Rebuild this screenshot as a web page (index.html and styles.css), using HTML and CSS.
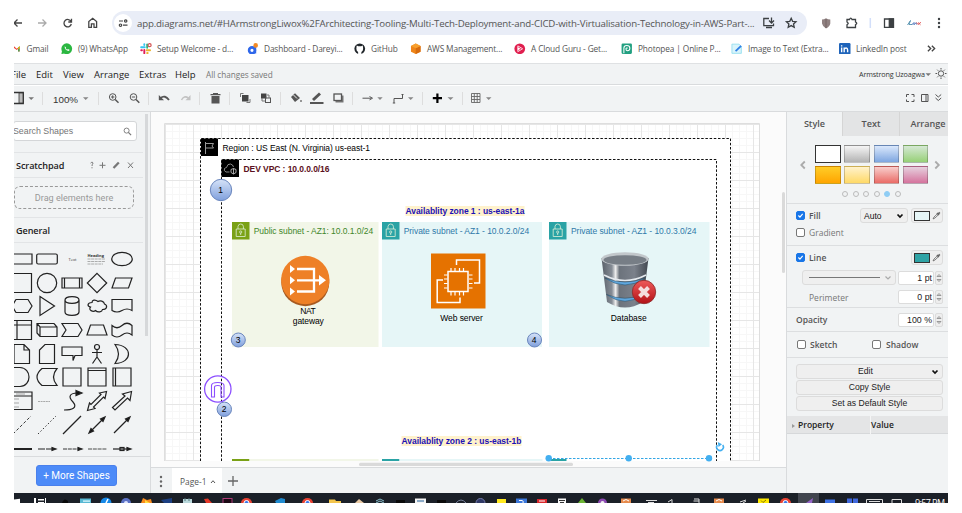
FILE: index.html
```html
<!DOCTYPE html>
<html lang="en">
<head>
<meta charset="utf-8">
<title>diagrams.net</title>
<link rel="stylesheet" href="styles.css">
</head>
<body>
<div class="window">
  <header class="address-row">
    <svg class="nav-icons" viewBox="14 11 98 24" fill="none" stroke="#444" stroke-width="1.3">
      <path d="M22 23H14.500M17.500 19.500L14 23L17.500 26.500"/>
      <path stroke="#aaa" d="M38 23H46M42.500 19.500L46 23L42.500 26.500"/>
      <path d="M71 21.500A3.700 3.700 0 1 0 71.300 24M71.500 18.800V22H68.300"/>
      <path d="M88.800 27.300V21.500L92.700 18.300L96.600 21.500V27.300H94V23.800H91.400V27.300Z"/>
    </svg>
    <div class="url-pill">
      <svg class="site-icon" viewBox="-9 -9 18 18" fill="none" stroke="#444" stroke-width="1.200"><circle r="9" fill="#fff" stroke="none"/><path d="M-4-2H0M0 2.200H4.500"/><circle cx="2.700" cy="-2" r="1.200"/><circle cx="-2.500" cy="2.200" r="1.200"/></svg>
      <span class="url">app.diagrams.net/#HArmstrongLiwox%2FArchitecting-Tooling-Multi-Tech-Deployment-and-CICD-with-Virtualisation-Technology-in-AWS-Part-...</span>
      <svg class="pill-icons" viewBox="762 14 36 18" fill="none" stroke="#3c4043" stroke-width="1.300"><path d="M769 18.500H763.800V25.700H773.500V23.500M766 27.500H772M771.500 17.500V22.500M769 20.500L771.500 23L774 20.500"/><path d="M791.200 18.300L792.600 21.300L796 21.700L793.500 24L794.200 27.200L791.200 25.600L788.200 27.200L788.900 24L786.400 21.700L789.800 21.300Z"/></svg>
    </div>
    <svg class="ext-icons" viewBox="807 11 141 24" fill="none" stroke="#3c4043" stroke-width="1.300">
      <path d="M822 19.500Q824 19.500 826 18.200Q828 19.500 830.300 19.500V23.500Q829.800 26.500 826 28.500Q822.500 26.500 822 23.500Z" fill="#8f8080" stroke="none"/><path d="M826 19V28" stroke="#7a6a6a"/>
      <path d="M847 19.500H849.500Q850.700 16.800 852 19.500H855.500V22Q858 23.200 855.500 24.700V27.500H847V24.700Q849.500 23.300 847 22Z"/>
      <path d="M870.300 18V28" stroke="#d3dffa" stroke-width="1.500"/>
      <path d="M884.500 19H893.300V27.300H884.500Z"/><path d="M889.300 19H893.500V27.300H889.300Z" fill="#3c4043"/>
      <path d="M907.500 25L910.500 20.500L909 24.500H912.500" stroke="#3d84a5" stroke-width=".8"/><path d="M912 24.500L914 22.500L914 24.800L916 22.700L916.500 24.500" stroke="#416bb5" stroke-width=".9"/><path d="M916.500 22.500L918 24.500L921 22.300M918 22.400L920.500 24.800" stroke="#dd4949" stroke-width=".9"/>
      <g fill="#3c4043" stroke="none"><circle cx="939" cy="19" r="1.200"/><circle cx="939" cy="23" r="1.200"/><circle cx="939" cy="27" r="1.200"/></g>
    </svg>
  </header>

  <nav class="bookmarks">
    <a><svg viewBox="0 0 10 10"><path d="M0 2L3.500 5L7 2V8.500H5.200V5L3.500 6.500L0 4Z" fill="#ea4335"/><path d="M5.200 3.500L7 2V8.500H5.200Z" fill="#34a853"/><path d="M5.200 3.500L7 2V4.500L5.200 5.500Z" fill="#fbbc04"/></svg><span>Gmail</span></a>
    <a><svg viewBox="0 0 10 10"><circle cx="5" cy="5" r="4.700" fill="#2bb741"/><path d="M.3 9.700L1 6.500L3.400 9Z" fill="#2bb741"/><path d="M3.200 2.800Q3 6.500 7 7L7.400 5.900L6 5.300L5.300 5.900L4 4.600L4.400 4Z" fill="#fff"/></svg><span>(9) WhatsApp</span></a>
    <a><svg viewBox="0 0 12 12" stroke-width="2" stroke-linecap="round"><path d="M1.200 4.500H5M4.500 1.200V2" stroke="#36c5f0"/><path d="M7.500 1.500V5" stroke="#2eb67d"/><path d="M7 7.500H10.500M7.500 10.500H8" stroke="#ecb22e"/><path d="M4.500 7.200V10.700M1.300 7.500H2" stroke="#e01e5a"/><circle cx="10" cy="2.300" r="1.600" fill="#fff" stroke="#d45454" stroke-width="1.300"/></svg><span>Setup Welcome - d...</span></a>
    <a><svg viewBox="0 0 10 11"><circle cx="4.300" cy="7" r="2.800" fill="none" stroke="#2f67ea" stroke-width="2.500"/><path d="M6 3H8.300V10H6Z" fill="#2f67ea"/><circle cx="7.800" cy="2.300" r="2.200" fill="#f28a25"/></svg><span>Dashboard - Dareyi...</span></a>
    <a><svg viewBox="0 0 12 12"><circle cx="6" cy="6" r="5.600" fill="#20252a"/><path d="M4.300 11.800V9.500Q2 8 2.600 4.600L2.800 2.500L4.500 3.300H7.500L9.200 2.500L9.400 4.600Q10 8 7.700 9.500V11.800Z" fill="#fff"/></svg><span>GitHub</span></a>
    <a><svg viewBox="0 0 12 12"><path d="M6 .5L11 3V9L6 11.500L1 9V3Z" fill="#ef8519"/><path d="M6 5.500L11 3V9L6 11.500Z" fill="#d66b0e"/><path d="M6 .5L11 3L6 5.500L1 3Z" fill="#f7a02e"/></svg><span>AWS Management...</span></a>
    <a><svg viewBox="0 0 12 12"><circle cx="6" cy="6" r="5.600" fill="#e01f4f"/><path d="M4 3L9 6L4 9Z" fill="none" stroke="#ffd9e4"/><path d="M4 4.500L7 6L4 7.500Z" fill="#fff"/></svg><span>A Cloud Guru - Get...</span></a>
    <a><svg viewBox="0 0 10 10"><rect x=".5" y=".5" width="9" height="9" rx="1" fill="#22a081"/><path d="M2.500 9V4.500Q2.500 2.200 5 2.200Q7.700 2.200 7.700 4.600Q7.700 6.700 5.500 6.700Q4.200 6.500 4.300 5Q4.700 3.900 5.800 4.500" fill="none" stroke="#fff" stroke-width=".9"/></svg><span>Photopea | Online P...</span></a>
    <a><svg viewBox="0 0 10 10"><path d="M.8 1H7L9 3V9H.8Z" fill="#d9f4fb" stroke="#8bdcee" stroke-width=".7"/><path d="M4 7L8.800 2.500" stroke="#2f7fe6" stroke-width="1.600"/></svg><span>Image to Text (Extra...</span></a>
    <a><svg viewBox="0 0 10 10"><rect width="10" height="10" rx="1" fill="#1f64ba"/><path d="M2.300 4V8M2.300 2V3M4.500 8V4M4.500 5.500Q5 4.300 6.200 4.300Q7.500 4.300 7.500 6V8" fill="none" stroke="#fff" stroke-width="1.200"/></svg><span>LinkedIn post</span></a>
    <svg class="more" viewBox="0 0 8 8" fill="none" stroke="#444" stroke-width="1.200"><path d="M.8 1.500L3.300 4L.8 6.500M4.300 1.500L6.800 4L4.300 6.500"/></svg>
  </nav>

  <nav class="menubar">
    <span>File</span><span>Edit</span><span>View</span><span>Arrange</span><span>Extras</span><span>Help</span><span class="saved">All changes saved</span>
    <span class="user">Armstrong Uzoagwa</span>
    <svg class="user-icons" viewBox="924 66 24 16" fill="none" stroke="#555"><path d="M925.500 73.300H931L928.200 76Z" fill="#777" stroke="none"/><circle cx="941" cy="73.500" r="2.700"/><path d="M941 68V69.500M941 77.500V79M935.500 73.500H937M945 73.500H946.500M937.200 69.700L938.200 70.700M943.800 76.300L944.800 77.300M944.800 69.700L943.800 70.700M937.200 77.300L938.200 76.300"/></svg>
  </nav>

  <div class="toolbar">
    <svg class="tool-a" viewBox="14 87 39 24"><path d="M14 92.500H23.300V103.500H14" fill="none" stroke="#333" stroke-width="1.300"/><path d="M19 93H23V103H19Z" fill="#bbb" stroke="#333" stroke-width=".8"/><path d="M28.500 97.200H34L31.200 100Z" fill="#777"/><path d="M42.500 92V105" stroke="#ddd"/></svg>
    <span class="zoom-value">100%</span>
    <svg class="tool-b" viewBox="80 87 420 24" fill="none" stroke="#555">
      <path d="M83 97.200H88.500L85.700 100ZM377.300 97.200H382.700L380 100ZM408 97.200H413.500L410.700 100ZM447.500 97.200H453.500L450.500 100ZM486 97.200H491.500L488.700 100Z" fill="#888" stroke="none"/>
      <path d="M98.500 92V105M148.500 92V105M199.500 92V105M229.500 92V105M280.500 92V105M352.500 92V105M422.500 92V105M462.500 92V105" stroke="#ddd"/>
      <circle cx="112.700" cy="97" r="3.300"/><path d="M115.200 99.500L118.500 102.700" stroke-width="1.500"/><path d="M111 97H114.400M112.700 95.300V98.700"/>
      <circle cx="133.500" cy="97" r="3.300"/><path d="M136 99.500L139.300 102.700" stroke-width="1.500"/><path d="M131.800 97H135.200"/>
      <path d="M160.500 98Q165 94.500 169 100" stroke-width="1.800"/><path d="M158.800 95V100.300H164Z" fill="#555" stroke="none"/>
      <path d="M181.500 100Q184 95 188.500 98" stroke="#c2c2c2" stroke-width="1.500"/><path d="M190.500 95V100.300H185.500Z" fill="#c2c2c2" stroke="none"/>
      <path d="M211.500 96H219.500V103.500H211.500ZM210.500 94H213V93H218V94H220.500V95.200H210.500Z" fill="#555" stroke="none"/>
      <rect x="242" y="95" width="6.500" height="6.500" fill="#444" stroke="none"/><path d="M243.500 93.500H240.500V97M246.500 102.500H250V99" stroke="#777"/>
      <rect x="261" y="93.500" width="5.500" height="5" fill="#444" stroke="none"/><rect x="265.500" y="98" width="5" height="4.500"/><path d="M262 98V101H265M267 95H269V98" stroke="#777"/>
      <path d="M291 97L295 93.200L300 98L295 102Z" fill="#555" stroke="none"/><path d="M293.500 95L297 98.500" stroke="#eee"/><circle cx="301" cy="101" r="1" fill="#777" stroke="none"/>
      <path d="M313 100L320 93.500" stroke-width="3"/><path d="M310 103H323.500" stroke-width="2"/>
      <rect x="335.500" y="95.500" width="8" height="7" fill="#777" stroke="none"/><rect x="334" y="94" width="7.500" height="6.500" fill="#f1f3f4" stroke-width="1.300"/>
      <path d="M362.500 98.200H371M369.500 96.500L372.500 98.200L369.500 99.900"/>
      <path d="M394 103V98.500H402.500V94.500M392.800 103H395.200M401.500 94.500H403.500"/>
      <path d="M432.800 98.200H442M437.400 93.500V103" stroke="#000" stroke-width="2.200"/>
      <path d="M471.500 93.500H480V102.500H471.500ZM471.500 96.500H480M471.500 99.500H480M474.300 93.500V102.500M477.200 93.500V102.500" stroke="#666" stroke-width=".9"/>
    </svg>
    <svg class="tool-c" viewBox="900 87 48 24" fill="none" stroke="#555"><path d="M906.500 97V94.500H909M911.500 94.500H914V97M914 99.500V101.500H911.500M909 101.500H906.500V99.500M921.500 94.500H928V101.500H921.500ZM926 94.500V101.500M935.500 94.500L938.300 97L941.200 94.500M935.500 98L938.300 100.500L941.200 98"/></svg>
  </div>

  <main class="workspace">
    <aside class="sidebar">
      <div class="search"><span>Search Shapes</span><svg viewBox="0 0 10 10" fill="none" stroke="#777"><circle cx="4" cy="4" r="2.800"/><path d="M6 6L9 9" stroke-width="1.400"/></svg></div>
      <div class="side-title"><b>Scratchpad</b><svg viewBox="88 159 50 12" fill="none" stroke="#777"><path d="M90.700 163.300Q91.200 162 92.300 162.200Q93.800 162.800 92.300 164.500L92 166M92 167.200V168.300M99.500 165.300H105.500M102.500 162.300V168.300"/><path d="M113.500 168L118.800 162.500" stroke-width="2.300"/><path d="M128 162.500L133 168M133 162.500L128 168"/></svg></div>
      <div class="drop-zone"><span>Drag elements here</span></div>
      <div class="side-title general"><b>General</b></div>
      <div class="shapes">
        <svg viewBox="-12 -12 24 24"><path d="M-10-5H10V5H-10Z"/></svg>
        <svg viewBox="-12 -12 24 24"><rect x="-10.300" y="-5" width="20.600" height="10" rx="1.500"/></svg>
        <svg viewBox="-12 -12 24 24"><text x="-3.500" y="1.500" font-size="4">Text</text></svg>
        <svg viewBox="-12 -12 24 24"><text x="-9.500" y="-2" font-size="4" font-weight="bold">Heading</text><path d="M-9.500 0H8M-9.500 2.500H8M-9.500 5H6" stroke="#999" stroke-width=".8" stroke-dasharray="3 .6"/></svg>
        <svg viewBox="-12 -12 24 24"><ellipse rx="10.300" ry="6.700"/></svg>

        <svg viewBox="-12 -12 24 24"><path d="M-10-9.500H9.500V9.500H-10Z"/></svg>
        <svg viewBox="-12 -12 24 24"><circle r="9.700"/></svg>
        <svg viewBox="-12 -12 24 24"><path d="M-10-5H10V5H-10ZM-7.500-5V5M7.500-5V5"/></svg>
        <svg viewBox="-12 -12 24 24"><path d="M0-9.700L9.700 0L0 9.700L-9.700 0Z"/></svg>
        <svg viewBox="-12 -12 24 24"><path d="M-6.500-5H10L6.500 5H-10Z"/></svg>

        <svg viewBox="-12 -12 24 24"><path d="M-6-6.500H6L10 0L6 6.500H-6L-10 0Z"/></svg>
        <svg viewBox="-12 -12 24 24"><path d="M-7-9.500L7.500 0L-7 9.500Z"/></svg>
        <svg viewBox="-12 -12 24 24"><path d="M-7-6V6C-7 10.500 7 10.500 7 6V-6C7-10.500-7-10.500-7-6C-7-1.500 7-1.500 7-6"/></svg>
        <svg viewBox="-12 -12 24 24"><path d="M-5-3.500C-10-3-10 0-6.500 1C-9 4-4 6.500-1.500 4.500C1 7 5 6 5.500 3.500C10 3.500 11-.5 7.500-2C7-5 3-6 1-4.500C-2-7-5-6-5-3.500Z"/></svg>
        <svg viewBox="-12 -12 24 24"><path d="M-10-6.500H10V4.500Q5 1.500 0 4.500T-10 4.500Z"/></svg>

        <svg viewBox="-12 -12 24 24"><path d="M-10-9.500H9.500V9.500H-10ZM-10-5H9.500M-5-9.500V9.500"/></svg>
        <svg viewBox="-12 -12 24 24"><path d="M-10-6.500H7L10-3V6.500H-7L-10 3ZM-10-6.500L-7-3H10M-7-3V6.500"/></svg>
        <svg viewBox="-12 -12 24 24"><path d="M-10-6.500H6L10 0L6 6.500H-10L-6 0Z"/></svg>
        <svg viewBox="-12 -12 24 24"><path d="M-6.500-5H6.500L10 5H-10Z"/></svg>
        <svg viewBox="-12 -12 24 24"><path d="M-10-4.500Q-5 0 0-4.500T10-4.500V5Q5 1 0 5T-10 5Z"/></svg>

        <svg viewBox="-12 -12 24 24"><path d="M-8-9.500H2L7.500-4V9.500H-8ZM2-9.500V-4H7.500"/></svg>
        <svg viewBox="-12 -12 24 24"><path d="M-2-9.500H7.500V9.500H-7.500V-4Z"/></svg>
        <svg viewBox="-12 -12 24 24"><path d="M-10-7H10V1.500H3L1 6.500V1.500H-10Z"/></svg>
        <svg viewBox="-12 -12 24 24"><circle cy="-7" r="2.500"/><path d="M0-4.500V3M-5-1.500H5M-4.500 9.500L0 3L4.500 9.500"/></svg>
        <svg viewBox="-12 -12 24 24"><path d="M-7-9.500C11-9 11 9-7 9.500Q0 0-7-9.500Z"/></svg>

        <svg viewBox="-12 -12 24 24"><path d="M-9-9.500H-2C10-9 10 9-2 9.500H-9Z"/></svg>
        <svg viewBox="-12 -12 24 24"><path d="M-5-8.500H10Q3 0 10 8.500H-5Q-15 0-5-8.500Z"/></svg>
        <svg viewBox="-12 -12 24 24"><path d="M-9-9H9V9H-9Z"/></svg>
        <svg viewBox="-12 -12 24 24"><path d="M-9-9H9V9H-9ZM-9-6.500H9"/></svg>
        <svg viewBox="-12 -12 24 24"><path d="M-9-9H9V9H-9ZM-6.500-9V9"/></svg>

        <svg viewBox="-12 -12 24 24"><path d="M-10-9H10V8.500H-10ZM-10-5H10"/><path d="M-6-7H3M-8-2H-3M-8 2H-3M-8 6H-3" stroke="#888" stroke-width=".7"/></svg>
        <svg viewBox="-12 -12 24 24"><path d="M-9 .5H3" stroke="#888" stroke-width=".7" stroke-dasharray="2 .6"/></svg>
        <svg viewBox="-12 -12 24 24"><path d="M-8 9C0 9 6 7 1 1C-5-5-1-8 5-8"/><path d="M4-10.500L10-8L4-5.500Z" fill="#111"/></svg>
        <svg viewBox="-12 -12 24 24"><path d="M-9.500 9.500L-7.500 2L-6 3.500L4-6.500L2.500-8L9.500-9.500L8-2.500L6.500-4L-3.500 6L-2 7.500Z"/></svg>
        <svg viewBox="-12 -12 24 24"><path d="M-9.500 6.500L3-5L.5-7L9.500-9.500L8-.5L5.500-3L-7 9Z"/></svg>

        <svg viewBox="-12 -12 24 24"><path d="M-9 9L9-9" stroke-dasharray="3 2" stroke-width=".9"/></svg>
        <svg viewBox="-12 -12 24 24"><path d="M-9 9L9-9" stroke-dasharray="1.500 2" stroke-width=".9"/></svg>
        <svg viewBox="-12 -12 24 24"><path d="M-9 9L9-9"/></svg>
        <svg viewBox="-12 -12 24 24"><path d="M-7 7L7-7"/><path d="M-8 8L-6 3.500L-3.500 6ZM8-8L6-3.500L3.500-6Z" fill="#111"/></svg>
        <svg viewBox="-12 -12 24 24"><path d="M-8 8L6-6"/><path d="M8-8L6-3.500L3.500-6Z" fill="#111"/></svg>

        <svg viewBox="-12 -12 24 24"><path d="M-10 0H10" stroke-width="2"/></svg>
        <svg viewBox="-12 -12 24 24"><path d="M-9 0H8" stroke-dasharray="7 1"/><path d="M5-1.500L9 0L5 1.500Z" fill="#111"/></svg>
        <svg viewBox="-12 -12 24 24"><path d="M-9 0H8" stroke-dasharray="4 .8" stroke-width=".9"/><path d="M6-1.500L10 0L6 1.500Z" fill="#111"/></svg>
        <svg viewBox="-12 -12 24 24"><path d="M-9 0H10" stroke-dasharray="4 .8" stroke-width=".8"/></svg>
        <svg viewBox="-12 -12 24 24"><path d="M-9 0H8"/><rect x="-2" y="-1.500" width="4" height="3"/><path d="M5-1.500L9 0L5 1.500Z" fill="#111"/></svg>
      </div>
      <div class="more-shapes"><button>+ More Shapes</button></div>
    </aside>

    <section class="stage">
      <svg class="diagram" viewBox="151 112 635 355">
        <defs>
          <pattern id="grid" x="165" y="124" width="28" height="28" patternUnits="userSpaceOnUse"><path d="M7.500 0V28M14.500 0V28M21.500 0V28M0 7.500H28M0 14.500H28M0 21.500H28" stroke="#f7f7f7" fill="none"/><path d="M0 .5H28M.5 0V28" stroke="#e6e6e6" fill="none"/></pattern>
          <linearGradient id="ball" x2="0" y2="1"><stop stop-color="#d6e3f8"/><stop offset="1" stop-color="#7f9fdc"/></linearGradient>
          <linearGradient id="steel"><stop stop-color="#596069"/><stop offset=".22" stop-color="#858c95"/><stop offset=".3" stop-color="#eee"/><stop offset=".38" stop-color="#6c737c"/><stop offset=".7" stop-color="#7b818b"/><stop offset="1" stop-color="#41474f"/></linearGradient>
          <linearGradient id="red" x2="0" y2="1"><stop stop-color="#ee5a5a"/><stop offset="1" stop-color="#b31117"/></linearGradient>
        </defs>
        <rect x="151" y="112" width="635" height="355" fill="#fbfbfb"/>
        <rect x="165" y="124" width="595" height="337" fill="#fff"/>
        <rect x="165" y="124" width="595" height="337" fill="url(#grid)"/>
        <path d="M164.500 461V123.500H759.500V461" fill="none" stroke="#dedede"/>
        <rect x="200.500" y="138.500" width="530" height="322.500" fill="#fff"/>
        <g fill="none" stroke="#111" stroke-dasharray="2.500 1.700"><path d="M200.500 461V138.500H730.500V461M221.500 461V159.500H716.500V461"/></g>

        <rect x="201" y="138.500" width="17" height="17.500" fill="#000"/><path d="M205.500 142V154M206 143.500H213.500L212 146L213.500 148H206" fill="none" stroke="#aaa" stroke-width=".9"/>
        <rect x="221.500" y="159.500" width="17.500" height="17.500" fill="#000"/><path d="M229.500 172H226Q223.500 171 224.500 168.500Q226 167.500 226.500 167.500Q227.500 163.500 230.500 164Q233 164.500 233.500 167" fill="none" stroke="#aaa" stroke-width=".8"/><path d="M231 169.500L233.500 168.500L236 169.500V172.500L233.500 174L231 172.500ZM233.500 168.500V174" fill="none" stroke="#bbb" stroke-width=".9"/>
        <text x="222.500" y="150.700" textLength="147.500">Region : US East (N. Virginia) us-east-1</text>
        <text x="243.500" y="171.500" textLength="86" font-weight="bold" fill="#5b1021">DEV VPC : 10.0.0.0/16</text>

        <rect x="405.500" y="206" width="119" height="10" fill="#fff2cc"/><rect x="401.500" y="436" width="120" height="10" fill="#fff2cc"/>
        <text x="405.500" y="214" textLength="119" font-weight="bold" fill="#1c10b5">Availablity zone 1 : us-east-1a</text>
        <text x="401.500" y="444" textLength="120" font-weight="bold" fill="#1c10b5">Availablity zone 2 : us-east-1b</text>

        <rect x="232" y="222" width="146.500" height="125" fill="#f2f6e8"/><rect x="382" y="222" width="160" height="125" fill="#e6f6f7"/><rect x="549" y="222" width="160.500" height="125" fill="#e6f6f7"/>
        <rect x="232" y="222" width="17.500" height="17.500" fill="#7aa116"/><rect x="382" y="222" width="17.500" height="17.500" fill="#2aa3a5"/><rect x="549" y="222" width="17.500" height="17.500" fill="#2aa3a5"/>
        <g id="lock" fill="none" stroke="#dff0d8" stroke-width=".8"><path d="M236.200 229H245.200V236.500H236.200ZM238 229V226.500Q238.300 224 240.700 224Q243.200 224 243.400 226.500V229M240.700 233V235"/><circle cx="240.700" cy="232" r="1.100"/></g>
        <use href="#lock" x="150"/><use href="#lock" x="317"/>
        <text x="253.700" y="234" textLength="119.500" fill="#41872a">Public subnet - AZ1: 10.0.1.0/24</text>
        <text x="403.700" y="234" textLength="125.500" fill="#2f79a9">Private subnet - AZ1 - 10.0.2.0/24</text>
        <text x="571" y="234" textLength="125.500" fill="#2f79a9">Private subnet - AZ1 - 10.0.3.0/24</text>

        <circle cx="305.300" cy="282.200" r="24" fill="#a85a20"/><circle cx="305.300" cy="280" r="24.200" fill="#ee8027"/>
        <path d="M297 269H314V291.500H297M297 280.300H320" fill="none" stroke="#fff" stroke-width="2.300"/><path d="M290 265L295 269L290 273ZM290 276.300L295 280.300L290 284.300ZM290 287.500L295 291.500L290 295.500ZM319 275L326 280.300L319 285.500Z" fill="#fff"/>
        <text x="300.300" y="313.500" textLength="15.500">NAT</text><text x="292.800" y="324" textLength="31">gateway</text>

        <rect x="431" y="253.500" width="54.500" height="55" fill="#e57200"/>
        <g fill="none" stroke="#fff" stroke-width="1.500"><rect x="448" y="271.500" width="20" height="20"/><path d="M451 268V271M455 268V271M459.500 268V271M463.500 268V271M451 292V295.500M455 292V295.500M459.500 292V295.500M463.500 292V295.500M444 275H447.500M444 279H447.500M444 283.500H447.500M444 288H447.500M469 275H472.500M469 279H472.500M469 283.500H472.500M469 288H472.500" stroke-width="1.200"/><path d="M456.500 265V260H479.500V283H474M443 280H437.200V302.500H460V297.500"/></g>
        <text x="440.300" y="321" textLength="42.500">Web server</text>

        <g><path d="M601.500 258L607 302Q625 313 643 302L648.500 258Z" fill="url(#steel)"/><ellipse cx="625" cy="259" rx="23.700" ry="6.700" fill="#c2c7cb"/><ellipse cx="625" cy="260" rx="21.500" ry="4.800" fill="#777e86"/><path d="M604 275Q625 286 646 275" fill="none" stroke="#e4e9ee" stroke-width="1.500"/><path d="M605 278Q625 286 645 278Q625 292 605 278Z" fill="#5fa7de" stroke="#24485f" stroke-width=".5"/><path d="M606.500 294.500Q625 302 643.500 294.500Q625 308 606.500 294.500Z" fill="#5fa7de" stroke="#24485f" stroke-width=".5"/></g>
        <circle cx="644" cy="292" r="11.700" fill="url(#red)" stroke="#8c2a2a" stroke-width=".8"/><path d="M639.500 287.500L648.500 296.500M648.500 287.500L639.500 296.500" stroke="#f4dede" stroke-width="4"/>
        <text x="610.700" y="321" textLength="36">Database</text>

        <g fill="url(#ball)" stroke="#6a86bd"><circle cx="221" cy="190" r="10.700"/><circle cx="238.300" cy="340" r="7"/><circle cx="534.500" cy="340" r="7"/><circle cx="224.300" cy="409.300" r="7.200"/></g>
        <g text-anchor="middle"><text x="220.500" y="193">1</text><text x="238" y="342.500">3</text><text x="534" y="342.500">4</text><text x="224" y="412">2</text></g>
        <g fill="none" stroke="#8c4fff" stroke-width="1.300"><circle cx="217.800" cy="389" r="13.200"/><path d="M211.500 397V385.500Q211.500 382.500 217.800 382.500Q224 382.500 224 385.500V397H221V387Q221 385.500 217.800 385.500Q214.500 385.500 214.500 387V397Z" stroke-width="1.100"/></g>

        <rect x="232" y="459" width="17.500" height="2" fill="#7aa116"/><rect x="249.500" y="459" width="129" height="2" fill="#f2f6e8"/><rect x="382" y="459" width="17.500" height="2" fill="#2aa3a5"/><rect x="399.500" y="459" width="143" height="2" fill="#e6f6f7"/><rect x="551" y="459" width="15.500" height="2" fill="#2aa3a5"/>
        <path d="M549 458.500H709" stroke="#33a6e5" stroke-dasharray="2.500 1.500"/>
        <g fill="#43aff0"><circle cx="548.700" cy="458.300" r="3.200"/><circle cx="628.700" cy="458.300" r="3.200"/><circle cx="709" cy="458.300" r="3.200"/></g>
        <path d="M717.300 445A3.400 3.400 0 1 0 722.700 445" fill="none" stroke="#43aff0" stroke-width="1.500"/><path d="M717.800 442L722 444.200L718.500 447Z" fill="#43aff0"/>
        <rect x="359" y="462.700" width="214" height="3.300" rx="1.500" fill="#dadada"/><rect x="782" y="192" width="3" height="81" rx="1.500" fill="#dadada"/>
      </svg>
      <div class="tabs">
        <svg viewBox="151 467 21 26"><g fill="#666"><circle cx="161" cy="476" r="1.200"/><circle cx="161" cy="480.500" r="1.200"/><circle cx="161" cy="485" r="1.200"/></g></svg>
        <div class="page-tab"><span>Page-1</span><svg viewBox="0 0 6 6" fill="none" stroke="#555"><path d="M1 4L3 1.700L5 4"/></svg></div>
        <svg class="add" viewBox="0 0 12 12" stroke="#666" stroke-width="1.300"><path d="M1 6H11M6 1V11"/></svg>
      </div>
    </section>

    <aside class="format">
      <div class="format-tabs"><b class="active">Style</b><b>Text</b><b>Arrange</b></div>
      <div class="swatch-area">
        <svg class="arrow" viewBox="0 0 8 10" fill="none" stroke="#aaa" stroke-width="1.800"><path d="M5.800 1.500L2.300 5L5.800 8.500"/></svg>
        <div class="swatches"><i class="white"></i><i class="gray"></i><i class="blue"></i><i class="green"></i><i class="orange"></i><i class="yellow"></i><i class="red"></i><i class="pink"></i></div>
        <svg class="arrow next" viewBox="0 0 8 10" fill="none" stroke="#aaa" stroke-width="1.800"><path d="M2.300 1.500L5.800 5L2.300 8.500"/></svg>
        <div class="dots"><i></i><i></i><i></i><i></i><i class="on"></i><i></i></div>
      </div>
      <div class="section fill-section">
        <div class="row"><i class="check on"><svg viewBox="0 0 9 9"><path d="M1.800 4.500L3.800 6.500L7.300 2.500"/></svg></i><b>Fill</b><div class="select auto">Auto<svg viewBox="0 0 8 6"><path d="M1.500 1.500L4 4L6.500 1.500"/></svg></div><div class="color-btn"><i class="pale"></i><svg viewBox="0 0 9 9" fill="none" stroke="#666"><path d="M1 8L2 6L5.500 2.700L6.500 3.700L3 7Z" stroke-width=".8"/><path d="M5 2L7 4M6.200 3L7.800 1.300" stroke-width="1.700"/></svg></div></div>
        <div class="row gradient"><i class="check"></i><span>Gradient</span></div>
      </div>
      <div class="section line-section">
        <div class="row"><i class="check on"><svg viewBox="0 0 9 9"><path d="M1.800 4.500L3.800 6.500L7.300 2.500"/></svg></i><b>Line</b><div class="color-btn push"><i class="teal"></i><svg viewBox="0 0 9 9" fill="none" stroke="#666"><path d="M1 8L2 6L5.500 2.700L6.500 3.700L3 7Z" stroke-width=".8"/><path d="M5 2L7 4M6.200 3L7.800 1.300" stroke-width="1.700"/></svg></div></div>
        <div class="row"><div class="select stroke"><hr><svg viewBox="0 0 8 6"><path d="M1.500 1.500L4 4L6.500 1.500"/></svg></div><div class="num">1 pt</div><div class="spin"><svg viewBox="0 0 6 10"><path d="M1 3.500L3 1.500L5 3.500ZM1 6.500L3 8.500L5 6.500Z"/></svg></div></div>
        <div class="row perimeter"><span>Perimeter</span><div class="num">0 pt</div><div class="spin"><svg viewBox="0 0 6 10"><path d="M1 3.500L3 1.500L5 3.500ZM1 6.500L3 8.500L5 6.500Z"/></svg></div></div>
      </div>
      <div class="section opacity"><b>Opacity</b><div class="num">100 %</div><div class="spin"><svg viewBox="0 0 6 10"><path d="M1 3.500L3 1.500L5 3.500ZM1 6.500L3 8.500L5 6.500Z"/></svg></div></div>
      <div class="section checks"><i class="check"></i><b>Sketch</b><i class="check"></i><b>Shadow</b></div>
      <div class="section buttons"><div class="btn">Edit<svg viewBox="0 0 8 6"><path d="M1.500 1.500L4 4L6.500 1.500"/></svg></div><div class="btn">Copy Style</div><div class="btn">Set as Default Style</div></div>
      <div class="props"><b><em></em>Property</b><b>Value</b></div>
    </aside>
  </main>

  <footer class="taskbar">
    <svg viewBox="14 493 934 10">
      <rect x="798" y="493" width="21" height="10" fill="#41454e"/>
      <g fill="#fff"><path d="M14 499.500L20 498.700V503H14Z"/><path d="M34 498H36V503H34ZM38 499H44V500.500H38ZM38 502H44V503H38ZM45 498H46V503H45Z"/></g>
      <path d="M62 503Q64 497 68 501V503Z" fill="#090909"/>
      <rect x="80" y="498.500" width="11" height="4.500" fill="#58b8d3"/><rect x="83" y="500.500" width="7" height="1.200" fill="#e7fbff"/>
      <circle cx="106" cy="503" r="5.500" fill="#1689e8"/><path d="M106 503L108 499" stroke="#fff" stroke-width="1.500"/>
      <circle cx="126" cy="503" r="5" fill="#5b71c5"/><circle cx="126" cy="503" r="2" fill="#dce3ff"/>
      <path d="M141 503L143 498L147 500L151 499L152 503Z" fill="#fa8b1c"/><path d="M145 503V500L150 503Z" fill="#ffdc3e"/>
      <path d="M161 500L172 498V503H164Z" fill="#1c3f82"/>
      <rect x="183" y="499" width="9" height="4" fill="#b9d8dc"/><path d="M185 498V501M189 498V501" stroke="#55777b"/>
      <path d="M204 499L208 498.500L212 503H206Z" fill="#e63929"/>
      <rect x="223" y="498.500" width="9" height="6" fill="#1b0914" stroke="#ad3a77"/>
      <path d="M241 503A5.500 5 0 0 1 252 503Z" fill="#e94234"/><circle cx="246.500" cy="503" r="2.500" fill="#3c78e8" stroke="#fff"/>
      <path d="M275 501L281 498L285 499V503H276Z" fill="#208bd0"/>
      <path d="M302 503A5.500 5 0 0 1 313 503Z" fill="#e94234"/><circle cx="307.500" cy="503" r="2.500" fill="#3c78e8" stroke="#fff"/>
      <path d="M329 499.500H335L336 501H341V503H329Z" fill="#f3c54d"/><path d="M355 503L359 499L364 503Z" fill="#e8c9a5"/>
      <path d="M376 501L380 499L384 501M376 503L380 501L384 503" fill="none" stroke="#8cc0ce"/>
      <rect x="396" y="500" width="9" height="3" fill="#090909"/><rect x="415" y="498.500" width="11" height="4.500" fill="#f4f4f4"/><path d="M417 501H424" stroke="#25629b"/>
      <rect x="437" y="500" width="9" height="3" fill="#0a0a0a"/><path d="M456 503Q461 497 466 503" fill="none" stroke="#78829d"/><circle cx="480.500" cy="503" r="4.500" fill="#303966" stroke="#747cab"/>
      <rect x="497" y="499" width="9" height="4" fill="#ffe91f"/><rect x="516" y="498.500" width="11" height="5" fill="#3b77da"/><path d="M519 500.500H522Q524 501 523 503" fill="none" stroke="#fff"/>
      <rect x="537" y="499" width="10" height="4" fill="#d9272c"/><path d="M539 501H545" stroke="#fff"/>
      <rect x="558" y="498.500" width="8" height="4.500" fill="#f7f7f7"/><path d="M559 500.500H565M560 502.500H564" stroke="#333"/>
      <path d="M578 503L582 498L586 503Z" fill="#6cb534"/><circle cx="602.500" cy="503" r="4.500" fill="#8d4ab3"/><circle cx="602.500" cy="503" r="2" fill="#eee"/>
      <rect x="621" y="498.500" width="10" height="4.500" fill="#e68a4c"/><path d="M623 501Q626 498 629 501" fill="none" stroke="#fff"/>
      <path d="M646 500.500H657M648 502.500H654M668 502L672 499.500V503M694 499H699V503M693.500 501H699M740 502L746 500M743 503L746 501" fill="none" stroke="#ddd"/>
      <rect x="714" y="498.500" width="10" height="4.500" fill="#e68a4c"/><path d="M716 501Q719 498 722 501" fill="none" stroke="#fff"/>
      <rect x="758" y="498.500" width="11" height="4.500" fill="#ffe900"/><path d="M761 500.500L763 502.500L766 500" stroke="#887b00" fill="none"/>
      <path d="M780 503A5.500 5 0 0 1 791 503Z" fill="#e94234"/><circle cx="785.500" cy="503" r="2.500" fill="#3c78e8" stroke="#fff"/>
      <path d="M806 503L813 498L812 503Z" fill="#9465c8"/><rect x="825" y="499.500" width="10" height="4" fill="#3f72e5"/><path d="M847 498.500H852V503H847ZM853 498.500H858V503H853Z" fill="#4068dd"/>
      <path d="M866.500 503V499.500H882.500V503M869 501.500H880M892 503V499.500H901.500V503" fill="none" stroke="#ddd"/>
      <text x="915" y="506.300" textLength="30" fill="#fff" font-size="9">9:57 PM</text>
    </svg>
  </footer>
</div>
</body>
</html>
```
FILE: styles.css
```css
* { box-sizing: border-box; }
body { margin: 0; background: #fff; font-family: "Open Sans", "Noto Sans", sans-serif; font-size: 8.5px; color: #333; overflow: hidden; }
svg { display: block; flex: none; }
i, em { font-style: normal; }
.window { width: 934px; height: 503px; margin-left: 14px; overflow: hidden; display: flex; flex-direction: column; }
.window > * { flex: none; white-space: nowrap; }

.address-row { height: 35px; padding-top: 11px; display: flex; }
.nav-icons { width: 98px; height: 24px; }
.url-pill { width: 695px; height: 24px; border-radius: 12px; background: #e9edf7; display: flex; align-items: center; padding-left: 2px; }
.site-icon { width: 18px; height: 18px; }
.url { width: 625px; margin-left: 5px; font-size: 9.7px; color: #555; letter-spacing: -.17px; }
.pill-icons { width: 36px; height: 18px; }
.ext-icons { width: 141px; height: 24px; }

.bookmarks { height: 29px; padding-bottom: 1px; border-bottom: 1px solid #dfe1e3; display: grid; grid-template-columns: 47px 79px 107px 107px 56px 104px 107px 110px 108px 88px 10px; align-items: center; color: #555; font-size: 8.3px; letter-spacing: -.13px; }
.bookmarks a { display: flex; align-items: center; gap: 5.500px; }
.bookmarks a svg { width: 11.500px; height: 11.500px; }
.bookmarks a:first-child { gap: 4.500px; }
.bookmarks a:first-child svg { width: 8px; }
.more { width: 9px; height: 9px; }

.menubar { height: 21px; background: #f1f3f4; border-bottom: 1px solid #d9dbdd; display: grid; grid-template-columns: 22px 27px 31px 45px 36px 31px 653px 65px 24px; align-items: center; font-size: 9.5px; color: #222; }
.menubar span:first-child { margin-left: -3px; }
.menubar .saved { font-size: 8.2px; color: #777; letter-spacing: -.03px; }
.menubar .user { font-size: 7.2px; color: #333; letter-spacing: -.13px; }
.user-icons { width: 24px; height: 16px; }

.toolbar { height: 27px; background: #f1f3f4; border-top: 1px solid #fff; border-bottom: 1px solid #d9dbdd; display: grid; grid-template-columns: 39px 27px 820px 48px; align-items: center; }
.tool-a { width: 39px; height: 24px; }
.tool-b { width: 420px; height: 24px; }
.tool-c { width: 48px; height: 24px; }
.zoom-value { font-family: "Liberation Sans", sans-serif; font-size: 9.8px; padding-top: 2px; }

.workspace { height: 381px; display: grid; grid-template-columns: 137px 635px 162px; }

.sidebar { height: 381px; background: linear-gradient(#d6d8da, #d6d8da) 131px 2px / 3px 222px no-repeat, #f1f3f4; border-right: 1px solid #d9dbdd; overflow: hidden; }
.search { width: 124px; height: 20px; margin: 9px 0 11px -1px; border: 1px solid #d4d6d8; border-radius: 3px; background: #fff; display: flex; align-items: center; justify-content: space-between; padding-right: 4px; font-family: "Liberation Sans", sans-serif; font-size: 8.8px; color: #757575; }
.search svg { width: 9px; height: 9px; }
.search span { margin-left: -1px; }
.side-title { width: 129px; height: 26px; border: solid #e2e4e6; border-width: 1px 0; display: flex; align-items: center; justify-content: space-between; padding-left: 2px; padding-right: 5px; font-size: 9.1px; color: #222; }
.side-title svg { width: 50px; height: 12px; }
.side-title b { font-weight: 600; letter-spacing: -.1px; }
.drop-zone { height: 39px; padding-top: 8px; }
.drop-zone span { display: block; width: 120px; height: 23px; border: 1px dashed #999; border-radius: 6px; text-align: center; line-height: 22px; font-family: Roboto, sans-serif; font-size: 9.1px; color: #999; }
.shapes { height: 209px; margin: 4px 0 0 -5px; display: grid; grid-template-columns: repeat(5, 25.1px); grid-auto-rows: 23.7px; justify-items: center; overflow: hidden; }
.shapes svg { width: 24px; height: 24px; fill: none; stroke: #222; stroke-width: 1.200; }
.shapes text { fill: #333; stroke: none; }
.more-shapes { border-top: 1px solid #d9dbdd; height: 38px; padding: 8px 0 0 22px; }
.more-shapes button { display: block; width: 81px; height: 21px; padding: 0; border: 1px solid #4a80ec; border-radius: 3px; background: #4d8bf8; color: #fff; font: 10px Roboto, sans-serif; }

.stage { height: 381px; display: flex; flex-direction: column; }
.diagram { width: 635px; height: 355px; font-family: "Liberation Sans", sans-serif; font-size: 8.5px; }
.tabs { height: 26px; border-top: 1px solid #d9dbdd; background: #f1f3f4; display: flex; align-items: center; }
.tabs > svg:first-child { width: 21px; height: 26px; }
.page-tab { width: 50px; height: 25px; background: #fff; display: flex; align-items: center; gap: 4px; padding-left: 8px; padding-top: 2px; color: #555; font-size: 8.4px; }
.page-tab svg { width: 6px; height: 6px; }
.add { width: 12px; height: 12px; margin-left: 5px; }

.format { background: #f1f3f4; border-left: 1px solid #d9dbdd; overflow: hidden; color: #555; }
.format b { font-weight: 600; }
.format-tabs { height: 23px; display: grid; grid-template-columns: 55px 57px 57px; text-align: center; line-height: 24px; font-size: 9.1px; }
.format-tabs b { background: #e3e4e5; border-left: 1px solid #d5d5d5; }
.format-tabs .active { background: none; border: 0; }
.swatch-area { height: 68px; display: grid; grid-template-columns: 8px 114px 8px; grid-template-rows: 40px 16px; column-gap: 8px; padding: 10px 0 0 12px; align-items: center; }
.arrow { width: 8px; height: 10px; }
.next { margin-left: -4px; }
.swatches { display: grid; grid-template-columns: repeat(4, 25.5px); grid-template-rows: 18px 18px; gap: 3px 3.800px; margin-top: -1px; }
.swatches i { border: 1px solid #0003; }
.swatches .white { background: #fff; border-color: #333; }
.gray { background: linear-gradient(#f5f5f5, #b3b3b3); }
.blue { background: linear-gradient(#dae8fc, #7ea6e0); }
.green { background: linear-gradient(#d5e8d4, #97d077); }
.orange { background: linear-gradient(#ffcd28, #ffa500); }
.yellow { background: linear-gradient(#fff2cc, #ffd966); }
.red { background: linear-gradient(#f8cecc, #ea6b66); }
.pink { background: linear-gradient(#e6d0de, #d5739d); }
.dots { grid-column: 1 / 4; display: flex; gap: 4.500px; padding-left: 43px; padding-top: 1px; }
.dots i { width: 6px; height: 6px; border: 1px solid #bbb; border-radius: 50%; }
.dots .on { background: #8fcdf4; border-color: #8fcdf4; }
.section { border-top: 1px solid #dcdee0; padding-left: 9px; }
.row { display: flex; align-items: center; }
.fill-section { height: 42px; padding-top: 4px; }
.check { flex: none; width: 9px; height: 9px; border: 1px solid #777; border-radius: 2px; background: #fff; margin-right: 4px; }
.check.on { background: #1976e8; border-color: #1976e8; }
.check svg { width: 7px; height: 7px; fill: none; stroke: #fff; stroke-width: 1.500; }
.select { background: #efefef; border: 1px solid #dcdcdc; border-radius: 3px; height: 15px; display: flex; align-items: center; justify-content: space-between; padding: 0 3px; color: #111; font-family: "Liberation Sans", sans-serif; }
.select svg, .btn svg { width: 8px; height: 6px; fill: none; stroke: #111; stroke-width: 1.700; }
.auto { width: 48px; margin-left: auto; }
.color-btn { width: 32px; height: 15px; margin: 0 5px 0 3px; border: 1px solid #dcdcdc; border-radius: 3px; display: flex; align-items: center; gap: 2px; padding-left: 2px; background: #efefef; }
.color-btn i { width: 16px; height: 10px; border: 1px solid #333; }
.color-btn svg { width: 9px; height: 9px; }
.pale { background: #e6f6f7; }
.teal { background: #2fa3a5; }
.push { margin-left: auto; }
.gradient { height: 18px; color: #777; }
.line-section { height: 62px; padding-top: 4px; }
.line-section .row:nth-child(2) { margin-top: 5px; }
.stroke { width: 94px; margin: 0 2px 0 6px; }
.stroke hr { width: 71px; margin: 0 0 0 3px; border: 0; border-top: 1px solid #777; }
.stroke svg { stroke: #aaa; stroke-width: 1.200; }
.num { flex: none; width: 36px; height: 14px; background: #fff; border: 1px solid #dcdcdc; border-radius: 2px; text-align: right; padding-right: 1px; line-height: 12px; color: #222; font-family: "Liberation Sans", sans-serif; font-size: 8.8px; }
.spin { flex: none; width: 8px; height: 14px; margin-left: 1px; margin-right: 5px; padding-top: 1px; border: 1px solid #dcdcdc; border-radius: 2px; background: #eee; }
.spin svg { width: 6px; height: 10px; fill: #ddd; stroke: #888; stroke-width: .8; }
.perimeter { margin-top: 5px; padding-left: 13px; color: #777; }
.perimeter .num, .opacity .num { margin-left: auto; }
.opacity { height: 24px; display: flex; align-items: center; }
.checks { height: 26px; display: grid; grid-template-columns: 13px 62px 14px 50px; align-items: center; padding-left: 10px; }
.buttons { height: 59px; padding: 6px 5px 0 9px; display: flex; flex-direction: column; gap: 1px; }
.btn { height: 15px; border: 1px solid #dcdcdc; border-radius: 3px; background: #efefef; color: #222; font-family: "Liberation Sans", sans-serif; font-size: 8.6px; line-height: 13px; display: grid; justify-content: center; }
.btn:first-child { grid-template-columns: 1fr 8px; padding: 0 3px; align-items: center; text-align: center; }
.props { height: 18px; background: #e4e5e6; border-bottom: 1px solid #d6d8da; display: grid; grid-template-columns: 83px 1fr; line-height: 18px; color: #222; }
.props b + b { border-left: 1px solid #f5f5f5; }
.props em { display: inline-block; border: 2.500px solid transparent; border-left: 3px solid #999; margin: 0 1px 0 5px; }

.taskbar { height: 10px; background: #1b2028; overflow: hidden; }
.taskbar svg { width: 934px; height: 10px; font-family: "Open Sans", sans-serif; }
```
